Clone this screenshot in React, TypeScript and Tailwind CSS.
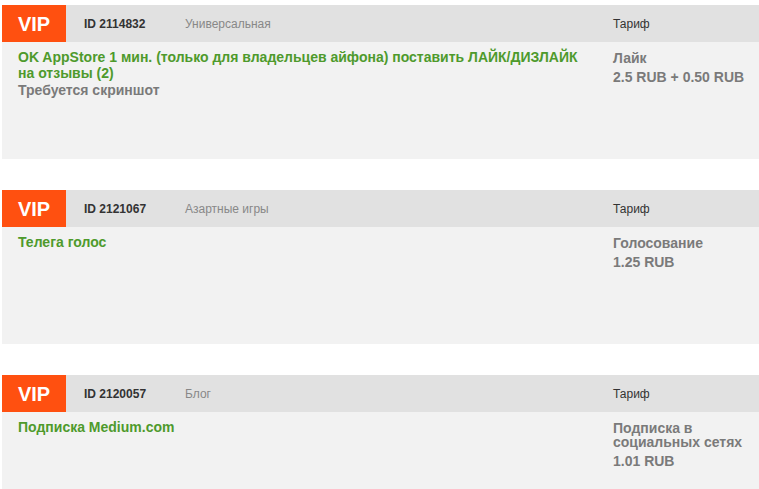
const tasks = [
  {
    id: "2114832",
    category: "Универсальная",
    title: "OK AppStore 1 мин. (только для владельцев айфона) поставить ЛАЙК/ДИЗЛАЙК на отзывы (2)",
    note: "Требуется скриншот",
    tariff: "Лайк",
    price: "2.5 RUB + 0.50 RUB",
  },
  {
    id: "2121067",
    category: "Азартные игры",
    title: "Телега голос",
    note: "",
    tariff: "Голосование",
    price: "1.25 RUB",
  },
  {
    id: "2120057",
    category: "Блог",
    title: "Подписка Medium.com",
    note: "",
    tariff: "Подписка в социальных сетях",
    price: "1.01 RUB",
  },
];

function TaskCard({ task }: { task: (typeof tasks)[number] }) {
  return (
    <div className="flex flex-col">
      <div className="flex h-[37px] items-center bg-[#e1e1e1]">
        <div className="flex h-full w-[64px] items-center justify-center bg-[#ff5010] text-[20px] font-bold text-white">
          VIP
        </div>
        <div className="ml-[18px] w-[101px] text-[12px] font-bold text-[#333]">
          ID {task.id}
        </div>
        <div className="flex-1 text-[12px] text-[#888]">{task.category}</div>
        <div className="w-[146px] text-[12px] text-[#333]">Тариф</div>
      </div>
      <div className="flex h-[117px] bg-[#f2f2f2] pt-[8px]">
        <div className="w-[611px] pl-[16px] pr-[20px]">
          <div className="-mt-[1px] text-[14px] leading-[16px] font-bold text-[#4e9a2c]">
            {task.title}
          </div>
          {task.note && (
            <div className="mt-[1px] text-[14px] leading-[16px] font-bold text-[#7a7a7a]">
              {task.note}
            </div>
          )}
        </div>
        <div className="w-[146px] pr-[6px] text-[14px] font-bold text-[#7a7a7a]">
          <div className="pt-[1px] leading-[14px]">{task.tariff}</div>
          <div className="mt-[5px] leading-[14px]">{task.price}</div>
        </div>
      </div>
    </div>
  );
}

export default function App() {
  return (
    <div
      className="flex h-[489px] w-[759px] flex-col gap-[31px] overflow-hidden bg-white pl-[2px] pt-[5px]"
      style={{ fontFamily: '"Liberation Sans", Arial, sans-serif' }}
    >
      {tasks.map((t) => (
        <TaskCard key={t.id} task={t} />
      ))}
    </div>
  );
}
